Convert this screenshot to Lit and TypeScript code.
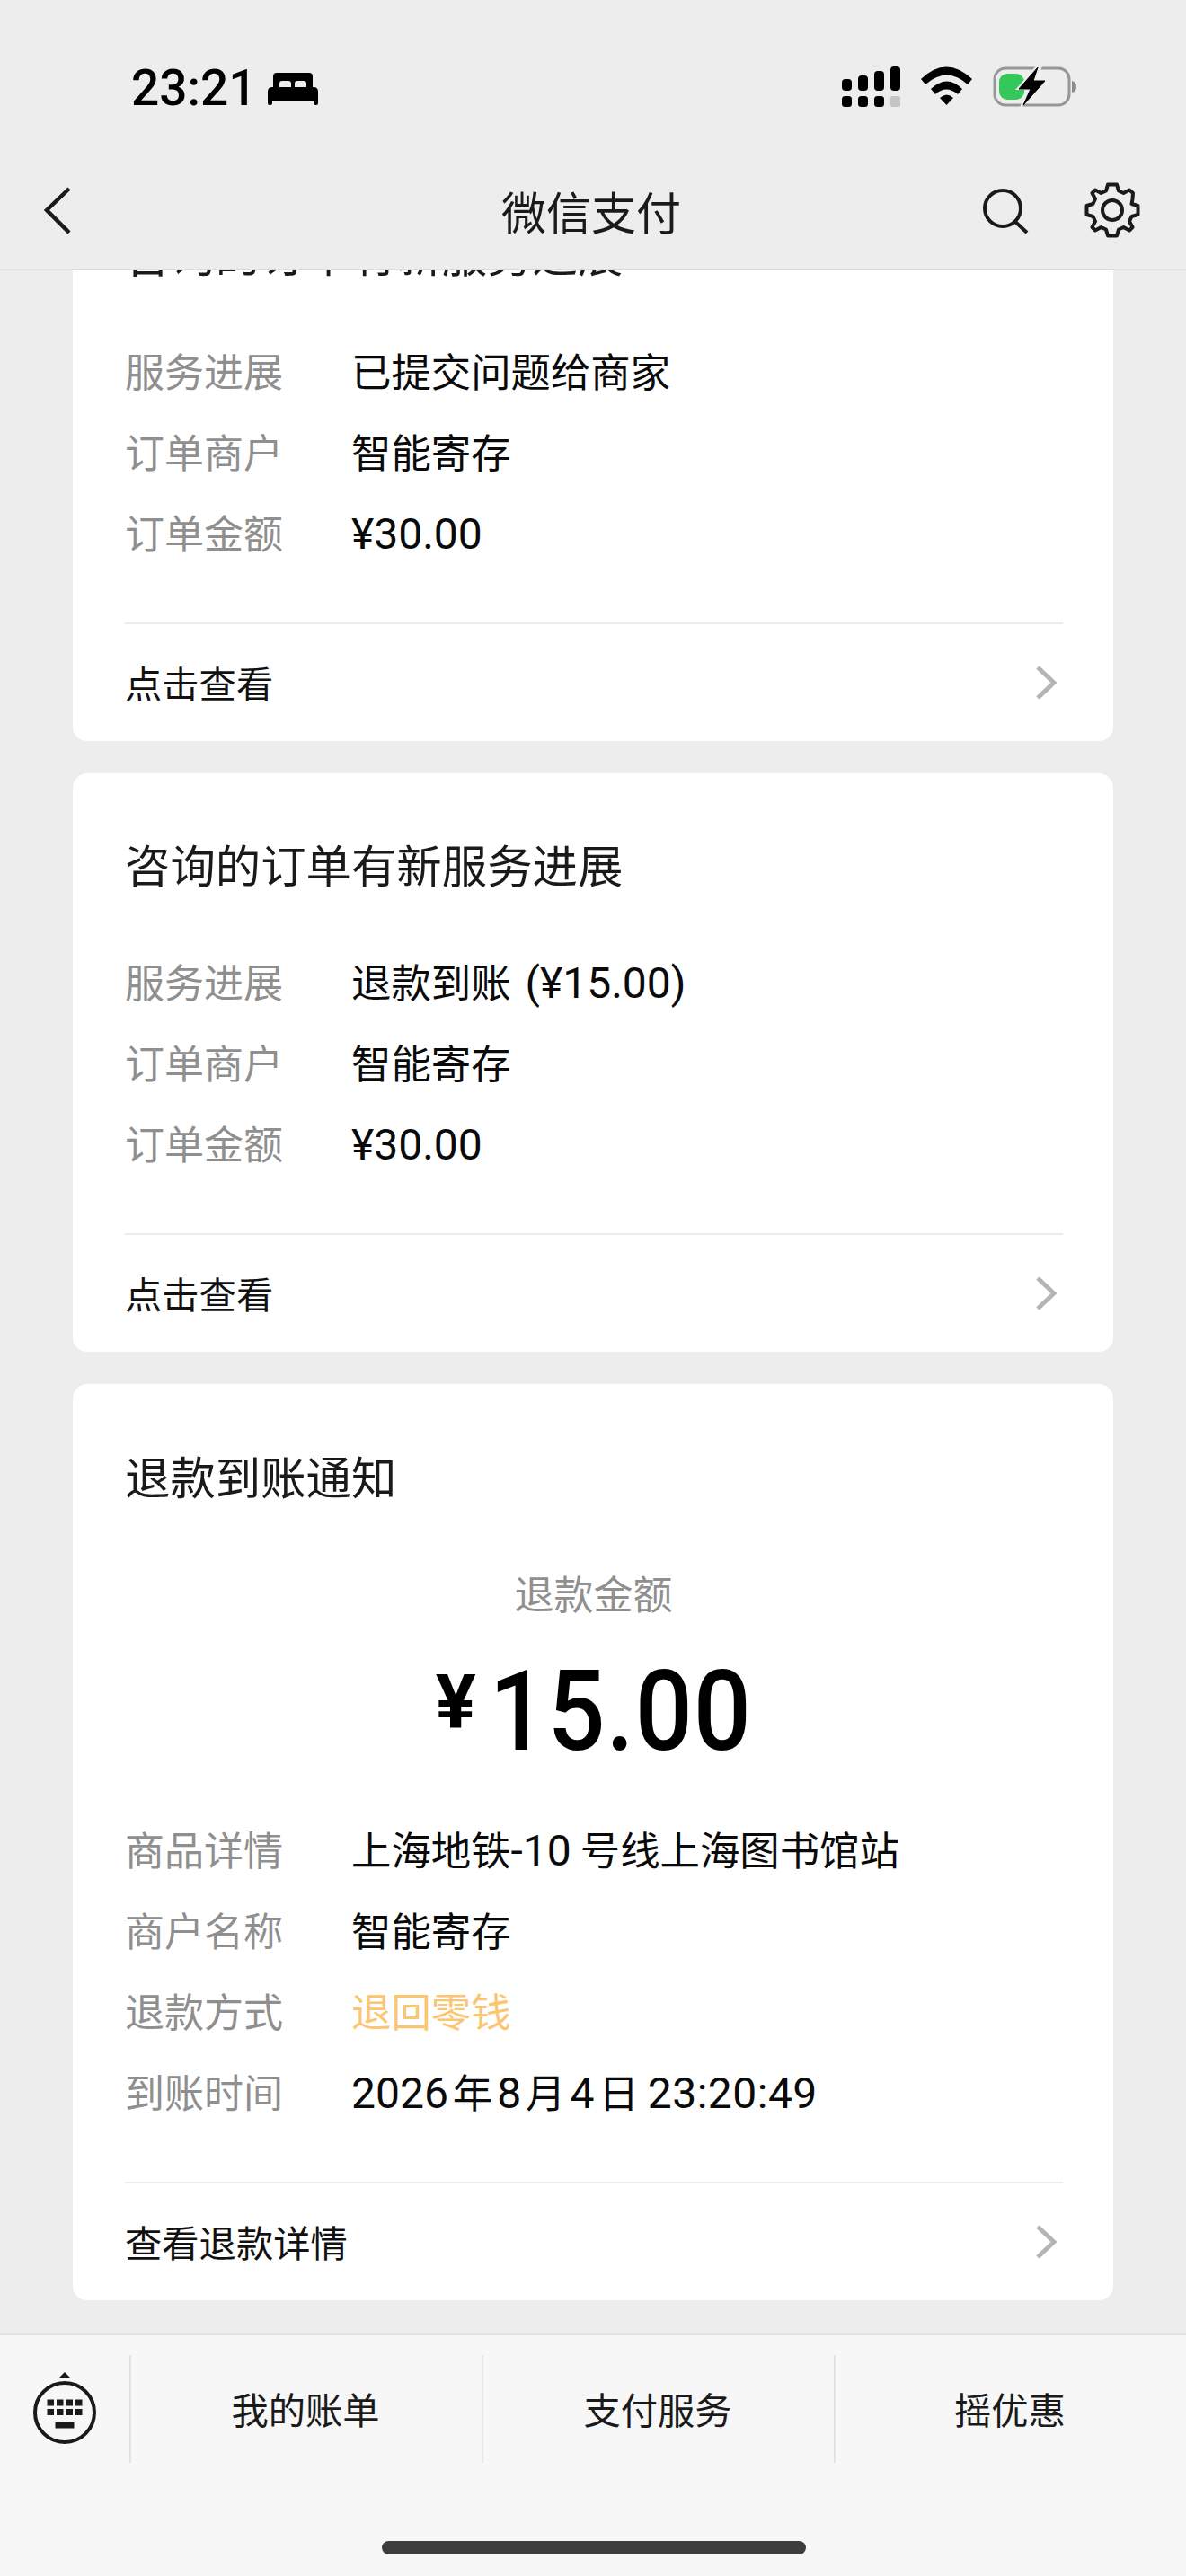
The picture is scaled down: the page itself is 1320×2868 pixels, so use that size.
import { LitElement, html, css } from "lit";
import { customElement } from "lit/decorators.js";

const chevron = html`<svg class="chev" width="24" height="40" viewBox="0 0 24 40"><path d="M3 3l18 17L3 37" fill="none" stroke="#b5b5b5" stroke-width="5"/></svg>`;

@customElement("app-root")
export class AppRoot extends LitElement {
  static styles = css`
    :host { display: block; width: 1320px; height: 2868px; font-family: "Noto Sans CJK SC", sans-serif; }
    .page { width: 1320px; height: 2868px; display: flex; flex-direction: column; background: #ededed; overflow: hidden; color: #111; }
    .top { height: 301px; flex: none; box-sizing: border-box; border-bottom: 1px solid #dcdcdc; background: #ededed; position: relative; z-index: 2; display: flex; flex-direction: column; }
    .status { height: 194px; flex: none; display: flex; align-items: flex-start; padding: 73px 0 0 146px; box-sizing: border-box; }
    .time { font: 500 55px/50px Roboto, sans-serif; color: #000; }
    .bed { margin: 7px 0 0 12px; }
    .sicons { margin-left: auto; margin-top: -3px; }
    .nav { flex: 1; display: flex; align-items: center; position: relative; margin-top: -26px; }
    .back { margin-left: 48px; }
    .title { position: absolute; left: -2px; right: 2px; text-align: center; font-size: 50px; line-height: 60px; color: #1a1a1a; font-weight: 400; }
    .nav-r { margin-left: auto; margin-right: 51px; display: flex; gap: 62px; align-items: center; }
    .main { flex: 1; min-height: 0; overflow: hidden; display: flex; flex-direction: column; justify-content: flex-end; gap: 36px; padding: 0 81px 37px; }
    .card { flex: none; background: #fff; border-radius: 16px; padding: 0 56px 0 58px; }
    .ctitle { font-size: 50.4px; line-height: 60px; padding-top: 71px; font-weight: 400; color: #1a1a1a; }
    .refund .ctitle { padding-top: 72px; }
    .rows { margin-top: 70px; display: flex; flex-direction: column; gap: 30px; }
    .row { display: flex; font-size: 44.4px; line-height: 60px; height: 60px; }
    .k { width: 252px; color: #8f8f8f; flex: none; font-size: 44px; }
    .v { color: #0a0a0a; white-space: pre; }
    .orange { color: #fbc572; }
    .num { font-family: Roboto, "Noto Sans CJK SC", sans-serif; font-size: 48px; }
    .paren { margin-left: 16px; }
    .date { word-spacing: -5px; }
    .clock { margin-left: 5px; letter-spacing: .5px; }
    .link { margin-top: 71px; border-top: 2px solid #ececec; height: 130px; display: flex; align-items: center; justify-content: space-between; font-size: 41.3px; color: #111; padding-right: 7px; }
    .link span { padding-bottom: 3px; }
    .center { text-align: center; margin-top: 70px; font-size: 44px; line-height: 60px; color: #8f8f8f; margin-left: -1px; }
    .amount { display: flex; justify-content: center; align-items: flex-start; margin-top: 41px; height: 124px; color: #000; font-family: Roboto, sans-serif; }
    .yen { font-weight: 700; font-size: 84px; line-height: 100px; margin: 2px 14px 0 0; }
    .big { display: inline-block; font-size: 124px; line-height: 124px; font-weight: 500; letter-spacing: 1px; transform: scaleX(.91); margin: 0 -14px; }
    .card.refund .rows { margin-top: 60px; }
    .bar { height: 270px; flex: none; background: #f7f7f7; border-top: 2px solid #e2e2e2; box-sizing: border-box; position: relative; display: flex; align-items: flex-start; padding-top: 22px; }
    .kb { width: 144px; height: 120px; flex: none; display: flex; align-items: center; justify-content: center; }
    .tab { width: 392px; height: 120px; flex: none; box-sizing: border-box; border-left: 2px solid #e2e2e2; display: flex; align-items: center; justify-content: center; font-size: 41.3px; color: #1a1a1a; padding: 0 2px 2px 0; }
    .home { position: absolute; left: 425px; top: 229px; width: 472px; height: 15px; border-radius: 8px; background: #3d3d3d; }
  `;

  row(k: string, v: unknown) {
    return html`<div class="row"><div class="k">${k}</div><div class="v">${v}</div></div>`;
  }
  link(t: string) {
    return html`<div class="link"><span>${t}</span>${chevron}</div>`;
  }
  order(progress: unknown) {
    return html`<section class="card">
      <div class="ctitle">咨询的订单有新服务进展</div>
      <div class="rows">
        ${this.row("服务进展", progress)}
        ${this.row("订单商户", "智能寄存")}
        ${this.row("订单金额", html`<span class="num">¥30.00</span>`)}
      </div>
      ${this.link("点击查看")}
    </section>`;
  }

  render() {
    return html`<div class="page">
      <header class="top">
        <div class="status">
          <div class="time">23:21</div>
          <svg class="bed" width="56" height="38" viewBox="0 0 56 38">
            <path fill="#000" d="M6 17V5q0-4 4-4h36q4 0 4 4v12h-7v-4q0-3-3-3h-7q-3 0-3 3v4h-4v-4q0-3-3-3h-7q-3 0-3 3v4z"/>
            <path fill="#000" d="M5 17h46q5 0 5 5v13q0 2-2 2h-1q-2 0-2-2v-3H5v3q0 2-2 2H2q-2 0-2-2V22q0-5 5-5z"/>
          </svg>
          <svg class="sicons" width="402" height="60" viewBox="918 70 402 60">
            <g fill="#000">
              <rect x="937" y="88" width="11" height="13" rx="4"/><rect x="955" y="84" width="11" height="17" rx="4"/>
              <rect x="973" y="79" width="11" height="22" rx="4"/><rect x="991" y="74" width="11" height="27" rx="4"/>
              <rect x="937" y="107" width="11" height="12" rx="3.500"/><rect x="955" y="107" width="11" height="12" rx="3.500"/>
              <rect x="973" y="107" width="11" height="12" rx="3.500"/>
              <rect x="991" y="107" width="11" height="12" rx="2" fill="#c4c4c4"/>
              <path d="M1025 88q28-27 57 0l-5 6q-23-21-47 0z"/>
              <path d="M1036 99q18-17 35 0l-5 6q-13-11-25 0z"/>
              <path d="M1046 109q8-7 15 0l-7.500 8z"/>
            </g>
            <rect x="1107" y="76" width="83" height="41" rx="12" fill="none" stroke="#979797" stroke-width="3"/>
            <path d="M1193 90q5 1 5 6.500t-5 6.500z" fill="#8c8c8c"/>
            <rect x="1112" y="82" width="28" height="29" rx="9" fill="#34c759"/>
            <path d="M1156 70l-26 30h13l-9 22 34-33h-14l7-18z" fill="#ededed"/>
            <path d="M1155 75l-21 24h13l-8 18 24-27h-13l5-15z" fill="#000" stroke="#000" stroke-width="1"/>
          </svg>
        </div>
        <div class="nav">
          <svg class="back" width="34" height="56" viewBox="0 0 34 56"><path d="M29 4L4 28l25 25" fill="none" stroke="#1a1a1a" stroke-width="4.500"/></svg>
          <div class="title">微信支付</div>
          <div class="nav-r">
            <svg width="52" height="52" viewBox="0 0 52 52"><circle cx="23" cy="24" r="20" fill="none" stroke="#1a1a1a" stroke-width="4"/><path d="M36 38l14 13" stroke="#1a1a1a" stroke-width="4" fill="none"/></svg>
            <svg width="62" height="62" viewBox="-31 -31 62 62" fill="none" stroke="#1a1a1a" stroke-width="4" stroke-linejoin="round">
              <circle r="11"/>
              <path d="M-5-28.500H5L7-21.500 12.500-19 19-22.500 23-19 22.500-12.500 21.500-7 28.500-5V5L21.500 7 19 12.500 22.500 19 19 22.500 12.500 19 7 21.500 5 28.500H-5L-7 21.500-12.500 19-19 22.500-22.500 19-19 12.500-21.500 7-28.500 5V-5L-21.500-7-19-12.500-22.500-19-19-22.500-12.500-19-7-21.500z"/>
            </svg>
          </div>
        </div>
      </header>
      <main class="main">
        ${this.order("已提交问题给商家")}
        ${this.order(html`退款到账<span class="num paren">(¥15.00)</span>`)}
        <section class="card refund">
          <div class="ctitle">退款到账通知</div>
          <div class="center">退款金额</div>
          <div class="amount"><span class="yen">¥</span><span class="big">15.00</span></div>
          <div class="rows">
            ${this.row("商品详情", html`上海地铁<span class="num">-10</span> 号线上海图书馆站`)}
            ${this.row("商户名称", "智能寄存")}
            ${this.row("退款方式", html`<span class="orange">退回零钱</span>`)}
            ${this.row("到账时间", html`<span class="date"><span class="num">2026</span> 年 <span class="num">8</span> 月 <span class="num">4</span> 日 <span class="num clock">23:20:49</span></span>`)}
          </div>
          ${this.link("查看退款详情")}
        </section>
      </main>
      <footer class="bar">
        <div class="kb">
          <svg width="72" height="82" viewBox="0 0 72 82">
            <path d="M36 0l7 7H29z" fill="#1a1a1a"/>
            <circle cx="36" cy="45" r="33" fill="none" stroke="#1a1a1a" stroke-width="4"/>
            <g fill="#1a1a1a">
              <rect x="16.500" y="30.500" width="7.500" height="7"/><rect x="27" y="30.500" width="7.500" height="7"/><rect x="37.500" y="30.500" width="7.500" height="7"/><rect x="48" y="30.500" width="7.500" height="7"/>
              <rect x="16.500" y="41" width="7.500" height="7"/><rect x="27" y="41" width="7.500" height="7"/><rect x="37.500" y="41" width="7.500" height="7"/><rect x="48" y="41" width="7.500" height="7"/>
              <rect x="25.500" y="55.500" width="21" height="7"/>
            </g>
          </svg>
        </div>
        <div class="tab">我的账单</div>
        <div class="tab">支付服务</div>
        <div class="tab">摇优惠</div>
        <div class="home"></div>
      </footer>
    </div>`;
  }
}
